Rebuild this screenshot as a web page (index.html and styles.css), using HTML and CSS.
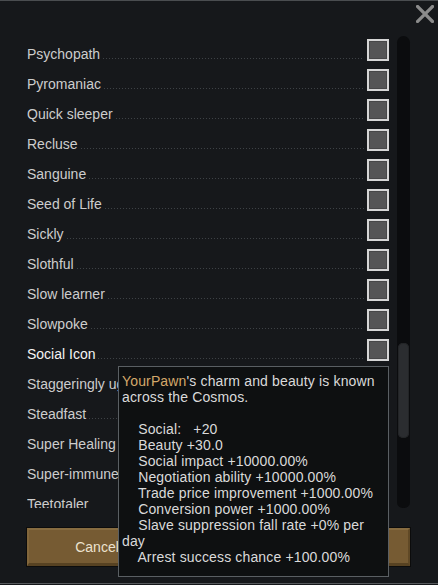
FILE: index.html
```html
<!DOCTYPE html>
<html>
<head>
<meta charset="utf-8">
<link rel="stylesheet" href="styles.css">
</head>
<body>
<div class="window">
  <div class="header">
    <svg class="close" width="18" height="18" viewBox="0 0 18 18"><path d="M1.5 1.5 L16.5 16.5 M16.5 1.5 L1.5 16.5" stroke="#8b8b8b" stroke-width="3.2" stroke-linecap="square"/></svg>
  </div>
  <div class="main">
    <div class="list">
      <div class="row"><span class="name">Psychopath</span><span class="leader"></span><span class="check"></span></div>
      <div class="row"><span class="name">Pyromaniac</span><span class="leader"></span><span class="check"></span></div>
      <div class="row"><span class="name">Quick sleeper</span><span class="leader"></span><span class="check"></span></div>
      <div class="row"><span class="name">Recluse</span><span class="leader"></span><span class="check"></span></div>
      <div class="row"><span class="name">Sanguine</span><span class="leader"></span><span class="check"></span></div>
      <div class="row"><span class="name">Seed of Life</span><span class="leader"></span><span class="check"></span></div>
      <div class="row"><span class="name">Sickly</span><span class="leader"></span><span class="check"></span></div>
      <div class="row"><span class="name">Slothful</span><span class="leader"></span><span class="check"></span></div>
      <div class="row"><span class="name">Slow learner</span><span class="leader"></span><span class="check"></span></div>
      <div class="row"><span class="name">Slowpoke</span><span class="leader"></span><span class="check"></span></div>
      <div class="row hover"><span class="name">Social Icon</span><span class="leader"></span><span class="check"></span></div>
      <div class="row"><span class="name">Staggeringly ugly</span><span class="leader"></span><span class="check"></span></div>
      <div class="row"><span class="name">Steadfast</span><span class="leader"></span><span class="check"></span></div>
      <div class="row"><span class="name">Super Healing</span><span class="leader"></span><span class="check"></span></div>
      <div class="row"><span class="name">Super-immune</span><span class="leader"></span><span class="check"></span></div>
      <div class="row"><span class="name">Teetotaler</span><span class="leader"></span><span class="check"></span></div>
    </div>
    <div class="scrollbar"><div class="thumb"></div></div>
  </div>
  <div class="buttons">
    <div class="btn">Cancel</div>
    <div class="btn">Accept</div>
  </div>
  <div class="tooltip"><span class="pawn">YourPawn</span>'s charm and beauty is known
across the Cosmos.

    Social:   +20
    Beauty +30.0
    Social impact +10000.00%
    Negotiation ability +10000.00%
    Trade price improvement +1000.00%
    Conversion power +1000.00%
    Slave suppression fall rate +0% per
day
    Arrest success chance +100.00%</div>
</div>
</body>
</html>
```

FILE: styles.css
```css
html, body {
  margin: 0;
  padding: 0;
  background: #15171a;
}

body {
  width: 438px;
  height: 585px;
  overflow: hidden;
  font-family: "Liberation Sans", Arial, sans-serif;
  font-size: 14px;
}

.window {
  position: relative;
  height: 582px;
  border-top: 1px solid #4a4d50;
  border-bottom: 1px solid #55585b;
  background: #16181b;
}

.header {
  height: 34px;
  display: flex;
  justify-content: flex-end;
  padding: 4px 4px 0 0;
  box-sizing: border-box;
}

.close {
  display: block;
}

.main {
  display: flex;
  gap: 8px;
  padding-left: 27px;
  height: 473px;
}

.list {
  width: 362px;
  height: 473px;
  overflow: hidden;
}

.row {
  display: flex;
  align-items: flex-start;
  height: 30px;
}

.name {
  color: #cdcdcd;
  line-height: 16px;
  margin-top: 11px;
  white-space: nowrap;
}

.row.hover .name {
  color: #f4f4f4;
}

.leader {
  flex: 1;
  height: 1px;
  margin: 23px 3px 0 3px;
  background: repeating-linear-gradient(to right, #3e4246 0 1px, transparent 1px 3px);
}

.check {
  width: 22px;
  height: 22px;
  margin-top: 4px;
  box-sizing: border-box;
  border: 2px solid #d6d6d6;
  background: #555556;
  box-shadow: inset 0 0 0 1px #474748;
  flex: none;
}

.scrollbar {
  width: 13px;
  height: 472px;
  margin-top: 1px;
  background: #0b0c0e;
  border-radius: 7px 7px 6px 6px;
  display: flex;
  flex-direction: column;
  align-items: center;
}

.thumb {
  width: 11px;
  height: 95px;
  margin-top: 307px;
  background: #2b2d30;
  border-radius: 5px;
  box-shadow: inset 0 0 0 1px #232527;
}

.buttons {
  display: flex;
  justify-content: space-between;
  padding: 0 28px 0 27px;
  margin-top: 20px;
}

.btn {
  width: 140px;
  height: 38px;
  box-sizing: border-box;
  background: #765b33;
  border-top: 2px solid #876c41;
  border-left: 2px solid #82663b;
  border-bottom: 3px solid #574222;
  border-right: 2px solid #604926;
  box-shadow: 0 0 0 1px #0c0c0c;
  color: #ece2cf;
  display: flex;
  align-items: center;
  justify-content: center;
  line-height: 16px;
}

.tooltip {
  position: absolute;
  left: 118px;
  top: 365px;
  width: 266px;
  height: 203px;
  border: 1px solid #5a5f63;
  background: #0e1011;
  padding: 6px 0 0 3px;
  color: #dadada;
  line-height: 16px;
  letter-spacing: 0.15px;
  white-space: pre;
  overflow: hidden;
}

.pawn {
  color: #d4a86a;
}
```
